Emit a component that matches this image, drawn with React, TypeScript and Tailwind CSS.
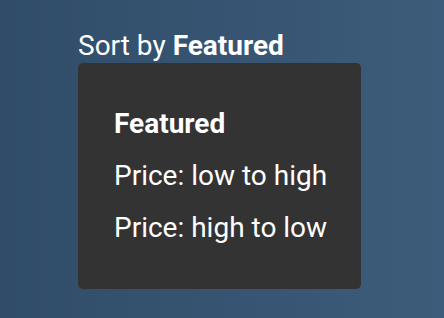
export default function App() {
    const options = ['Featured', 'Price: low to high', 'Price: high to low'];
    const selected = 'Featured';

    return (
        <div
            className="w-[444px] h-[318px] bg-gradient-to-r from-[#304c68] to-[#3d5c7b] text-white"
            style={{ fontFamily: 'Roboto, "Liberation Sans", sans-serif' }}
        >
            <div className="pl-[78px] pt-[29px]">
                <div className="text-[28px] leading-[34px]">
                    Sort by <span className="font-bold">{selected}</span>
                </div>
                <ul className="w-[283px] h-[226px] bg-[#333333] rounded-[5px] pl-[36px] pt-[35px]">
                    {options.map((opt) => (
                        <li
                            key={opt}
                            className={`text-[28px] leading-[52px] ${opt === selected ? 'font-bold' : ''}`}
                        >
                            {opt}
                        </li>
                    ))}
                </ul>
            </div>
        </div>
    );
}
